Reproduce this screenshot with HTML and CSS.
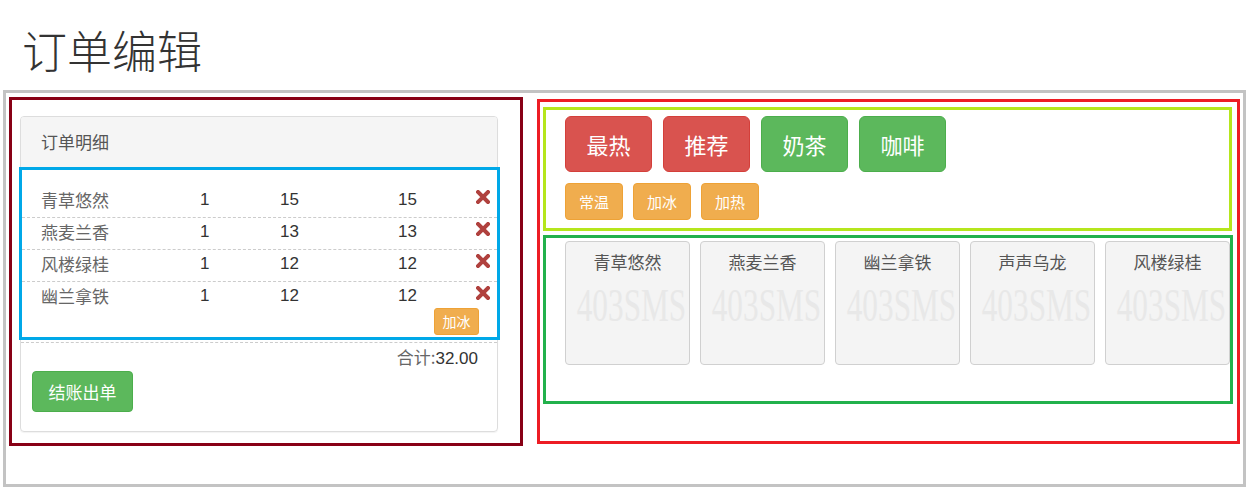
FILE: index.html
```html
<!DOCTYPE html>
<html lang="zh-CN">
<head>
<meta charset="utf-8">
<title>订单编辑</title>
<link rel="stylesheet" href="styles.css">
</head>
<body>
<h1 class="title">订单编辑</h1>
<div class="wrap">
  <div class="col-left">
    <div class="panel">
      <div class="panel-heading">订单明细</div>
      <div class="order-list">
        <div class="row"><span class="name">青草悠然</span><span>1</span><span>15</span><span>15</span><svg class="x" viewBox="0 0 14 14"><path d="M2 2L12 12M12 2L2 12"/></svg></div>
        <div class="row"><span class="name">燕麦兰香</span><span>1</span><span>13</span><span>13</span><svg class="x" viewBox="0 0 14 14"><path d="M2 2L12 12M12 2L2 12"/></svg></div>
        <div class="row"><span class="name">风楼绿桂</span><span>1</span><span>12</span><span>12</span><svg class="x" viewBox="0 0 14 14"><path d="M2 2L12 12M12 2L2 12"/></svg></div>
        <div class="row last"><span class="name">幽兰拿铁</span><span>1</span><span>12</span><span>12</span><svg class="x" viewBox="0 0 14 14"><path d="M2 2L12 12M12 2L2 12"/></svg></div>
        <div class="tag-line"><span class="tag">加冰</span></div>
      </div>
      <div class="panel-foot">
        <div class="total"><span class="lbl">合计:</span>32.00</div>
        <button class="btn-checkout">结账出单</button>
      </div>
    </div>
  </div>
  <div class="col-right">
    <div class="cats">
      <div class="big-row">
        <button class="big red">最热</button>
        <button class="big red">推荐</button>
        <button class="big green">奶茶</button>
        <button class="big green">咖啡</button>
      </div>
      <div class="small-row">
        <button class="small">常温</button>
        <button class="small">加冰</button>
        <button class="small">加热</button>
      </div>
    </div>
    <div class="products">
      <div class="card"><div class="pname">青草悠然</div><div class="ph">403SMS</div></div>
      <div class="card"><div class="pname">燕麦兰香</div><div class="ph">403SMS</div></div>
      <div class="card"><div class="pname">幽兰拿铁</div><div class="ph">403SMS</div></div>
      <div class="card"><div class="pname">声声乌龙</div><div class="ph">403SMS</div></div>
      <div class="card"><div class="pname">风楼绿桂</div><div class="ph">403SMS</div></div>
    </div>
  </div>
</div>
</body>
</html>
```
FILE: styles.css
```css
* { box-sizing: border-box; }
html, body { margin: 0; padding: 0; background: #fff; }
body {
  font-family: "Liberation Sans", "Noto Sans CJK SC", sans-serif;
  color: #333;
  width: 1250px;
  height: 497px;
  overflow: hidden;
}
.title {
  margin: 27px 0 17px 22px;
  font-family: "Noto Sans CJK SC", sans-serif;
  font-weight: 300;
  font-size: 45px;
  line-height: 46px;
  color: #333;
}
.wrap {
  margin: 0 4px 0 3px;
  height: 397px;
  border: 3px solid #c3c3c3;
  display: flex;
  align-items: flex-start;
}
.col-left {
  margin: 4px 0 0 3px;
  width: 514px;
  height: 349px;
  border: 3px solid #880015;
  padding: 16px 0 0 8px;
}
.panel {
  width: 478px;
  height: 316px;
  border: 1px solid #ddd;
  border-radius: 4px;
  box-shadow: 0 1px 1px rgba(0,0,0,0.05);
}
.panel-heading {
  height: 50px;
  background: #f5f5f5;
  border-radius: 3px 3px 0 0;
  padding-left: 20px;
  font-family: "Noto Sans CJK SC", sans-serif;
  font-size: 17px;
  line-height: 50px;
  color: #555;
}
.order-list {
  margin: 0 -3px 0 -2px;
  border: 3px solid #00a8e8;
  padding: 16px 7px 0 19px;
  height: 173px;
}
.row {
  display: grid;
  grid-template-columns: 159px 80px 118px 1fr 14px;
  height: 32px;
  border-bottom: 1px dashed #ccc;
  margin-left: -19px;
  margin-right: -7px;
  padding: 4px 7px 0 19px;
  font-size: 17px;
  line-height: 20px;
  color: #333;
}
.row.last { border-bottom: none; height: 24px; }
.row .name {
  font-family: "Noto Sans CJK SC", sans-serif;
  color: #666;
}
.x {
  width: 14px;
  height: 14px;
}
.x path {
  stroke: #b0413e;
  stroke-width: 4;
  stroke-linecap: square;
  fill: none;
}
.tag-line {
  display: flex;
  justify-content: flex-end;
  padding-right: 11px;
  margin-top: 2px;
}
.tag {
  display: inline-block;
  width: 45px;
  height: 27px;
  background: #f0ad4e;
  border: 1px solid #eea236;
  border-radius: 3px;
  color: #fff;
  font-family: "Noto Sans CJK SC", sans-serif;
  font-size: 14px;
  line-height: 25px;
  text-align: center;
}
.panel-foot {
  margin-top: 2px;
  border-top: 1px dashed #ccc;
  padding: 4px 19px 0 11px;
}
.total {
  text-align: right;
  font-size: 17px;
  line-height: 20px;
  color: #333;
}
.total .lbl {
  font-family: "Noto Sans CJK SC", sans-serif;
  color: #666;
}
.btn-checkout {
  display: block;
  margin-top: 2px;
  width: 101px;
  height: 41px;
  background: #5cb85c;
  border: 1px solid #4cae4c;
  border-radius: 4px;
  color: #fff;
  font-family: "Noto Sans CJK SC", sans-serif;
  font-size: 17px;
  padding: 0;
}
.col-right {
  margin: 6px 0 0 14px;
  width: 703px;
  height: 345px;
  border: 3px solid #ed1c24;
}
.cats {
  margin: 5px 0 0 3px;
  width: 689px;
  height: 124px;
  border: 3px solid #b5e61d;
  padding: 6px 0 0 19px;
}
.big-row, .small-row { display: flex; }
.big-row { gap: 11px; }
.small-row { gap: 10px; margin-top: 11px; }
button {
  font-family: "Noto Sans CJK SC", sans-serif;
  cursor: pointer;
}
.big {
  width: 87px;
  height: 56px;
  border-radius: 6px;
  color: #fff;
  font-size: 22px;
  padding: 0;
}
.big.red { background: #d9534f; border: 1px solid #d43f3a; }
.big.green { background: #5cb85c; border: 1px solid #4cae4c; }
.small {
  width: 58px;
  height: 37px;
  border-radius: 4px;
  background: #f0ad4e;
  border: 1px solid #eea236;
  color: #fff;
  font-size: 15px;
  padding: 0;
}
.products {
  margin: 4px 0 0 3px;
  width: 690px;
  height: 169px;
  border: 3px solid #22b14c;
  padding: 3px 0 0 19px;
  display: flex;
  gap: 10px;
}
.card {
  flex: 0 0 125px;
  height: 124px;
  background: #f4f4f4;
  border: 1px solid #d0d0d0;
  border-radius: 4px;
  overflow: hidden;
  text-align: center;
}
.pname {
  padding-top: 8px;
  font-family: "Noto Sans CJK SC", sans-serif;
  font-size: 17px;
  line-height: 24px;
  color: #555;
}
.ph {
  margin: 9px -41px 0;
  font-family: "Liberation Serif", serif;
  font-size: 46px;
  line-height: 46px;
  color: #e8e8e8;
  transform: translateX(4px) scaleX(0.68);
  white-space: nowrap;
}
```
